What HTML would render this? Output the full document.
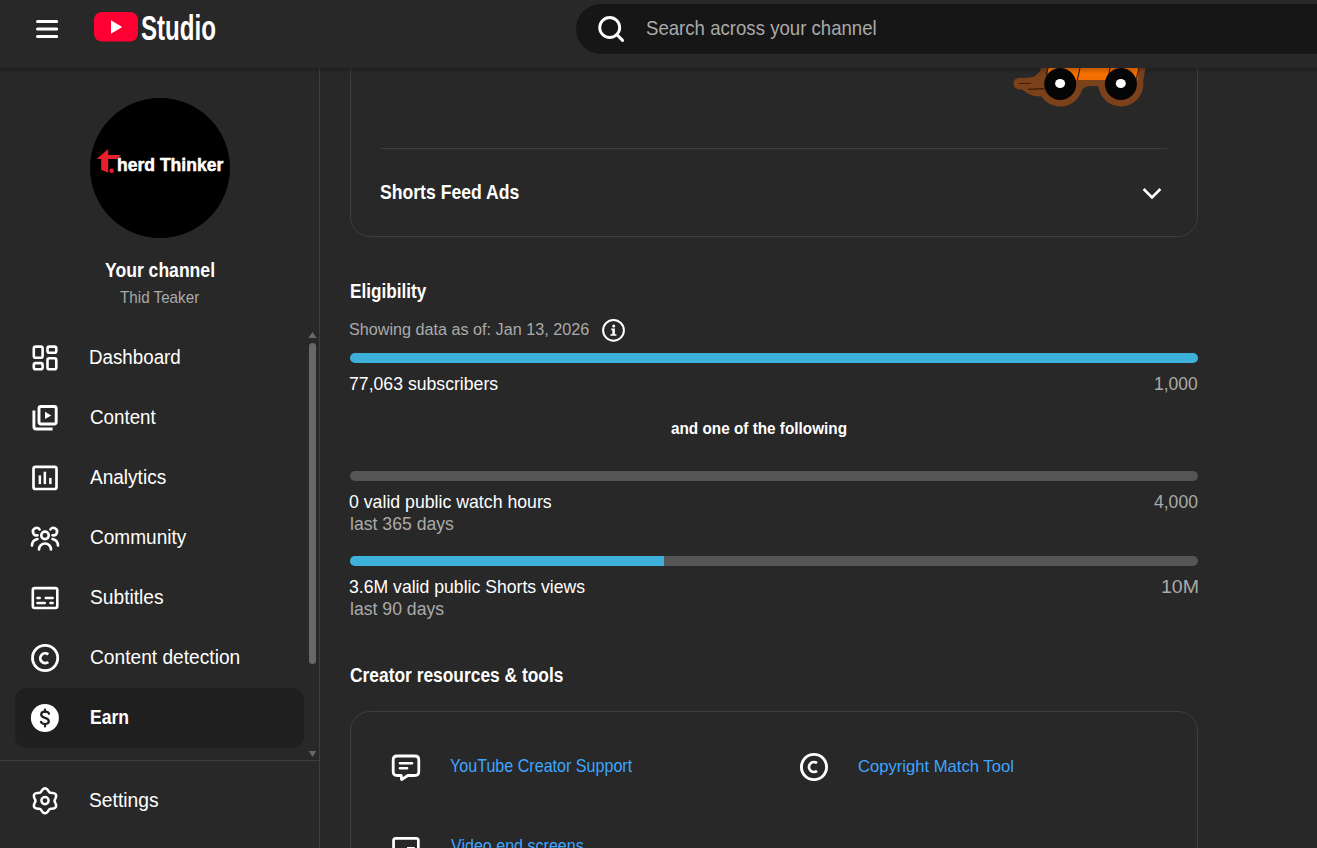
<!DOCTYPE html>
<html><head><meta charset="utf-8">
<style>
html,body{margin:0;padding:0;}
body{width:1317px;height:848px;overflow:hidden;position:relative;background:#282828;font-family:"Liberation Sans",sans-serif;}
.t{position:absolute;white-space:nowrap;line-height:1;}
#sidebar{position:absolute;left:0;top:0;width:319px;height:848px;border-right:1px solid #3e3e3e;background:#282828;}
#header{position:absolute;left:0;top:0;width:1317px;height:68px;background:#282828;}
#hshadow{position:absolute;left:0;top:68px;width:1317px;height:6px;background:linear-gradient(to bottom,rgba(0,0,0,0.2),rgba(0,0,0,0.16) 30%,rgba(0,0,0,0.05) 75%,rgba(0,0,0,0));}
</style></head><body>
<div id="sidebar"></div>
<div style="position:absolute;left:90px;top:98px;width:140px;height:140px;border-radius:50%;background:#000;"></div>
<svg style="position:absolute;left:90px;top:140px" width="40" height="40" viewBox="90 140 40 40">
<path d="M108.2 149.1 L108.2 154.9 L121.1 154.9 L116.9 159.1 L108.2 159.1 L108.2 172.7 L101.2 169.7 L101.2 159.1 L96.5 159.1 Z" fill="#e8202a"/>
<circle cx="111.6" cy="170.8" r="2.3" fill="#e8202a"/></svg>
<svg style="position:absolute;left:180px;top:150px" width="40" height="25" viewBox="180 150 40 25"><circle cx="184.1" cy="157.8" r="1.1" fill="#e8202a"/><circle cx="210.3" cy="166" r="1" fill="#e8202a"/></svg>
<div class="t" style="left:116.97px;top:156px;font-size:18.17px;color:#fff;font-weight:bold;transform:scaleX(0.9661);transform-origin:0 0;-webkit-text-stroke:0.5px #fff;">herd Thinker</div>

<div class="t" style="left:104.65px;top:260px;font-size:20.06px;color:#fff;font-weight:bold;transform:scaleX(0.8766);transform-origin:0 0;">Your channel</div>

<div class="t" style="left:119.70px;top:290px;font-size:16.57px;color:#aaa;transform:scaleX(0.9187);transform-origin:0 0;">Thid Teaker</div>

<div style="position:absolute;left:15px;top:688px;width:289px;height:60px;border-radius:12px;background:#1f1f1f;"></div>
<div class="t" style="left:89.40px;top:347px;font-size:20.35px;color:#fff;transform:scaleX(0.9218);transform-origin:0 0;">Dashboard</div>

<div class="t" style="left:89.76px;top:407px;font-size:20.35px;color:#fff;transform:scaleX(0.9230);transform-origin:0 0;">Content</div>

<div class="t" style="left:90.40px;top:467px;font-size:20.35px;color:#fff;transform:scaleX(0.9358);transform-origin:0 0;">Analytics</div>

<div class="t" style="left:89.75px;top:527px;font-size:20.35px;color:#fff;transform:scaleX(0.9356);transform-origin:0 0;">Community</div>

<div class="t" style="left:89.64px;top:587px;font-size:20.35px;color:#fff;transform:scaleX(0.9435);transform-origin:0 0;">Subtitles</div>

<div class="t" style="left:89.74px;top:647px;font-size:20.35px;color:#fff;transform:scaleX(0.9421);transform-origin:0 0;">Content detection</div>

<div class="t" style="left:89.67px;top:707px;font-size:20.20px;color:#fff;font-weight:bold;transform:scaleX(0.8693);transform-origin:0 0;">Earn</div>

<div class="t" style="left:89.44px;top:791px;font-size:19.91px;color:#fff;transform:scaleX(0.9675);transform-origin:0 0;">Settings</div>

<svg style="position:absolute;left:0;top:0" width="320" height="848">
<g fill="none" stroke="#fff" stroke-width="2.6">
<rect x="33.8" y="346.6" width="8.8" height="11.1" rx="1.8"/>
<rect x="47.5" y="346.6" width="8.8" height="6.1" rx="1.8"/>
<rect x="33.8" y="363.1" width="8.8" height="6.1" rx="1.8"/>
<rect x="47.5" y="358.2" width="8.8" height="11.1" rx="1.8"/>
</g>
<g fill="none" stroke="#fff" stroke-width="2.9">
<rect x="39" y="406.5" width="17.2" height="17.5" rx="2"/>
<path d="M33.9 410.5 V426.5 Q33.9 429 36.4 429 H52.6"/>
</g>
<path d="M45 411.7 L51.3 415.4 L45 419.1 Z" fill="#fff"/>
<g fill="none" stroke="#fff" stroke-width="2.7">
<rect x="33.5" y="466.8" width="23" height="22.2" rx="2"/>
</g>
<g fill="#fff">
<rect x="38.6" y="475.4" width="2.5" height="8.7"/>
<rect x="43.6" y="471.7" width="2.5" height="12.4"/>
<rect x="49.1" y="477.9" width="2.5" height="6.2"/>
</g>
<g fill="none" stroke="#fff" stroke-width="2.6" stroke-linecap="round">
<circle cx="45" cy="535.4" r="3.75"/>
<path d="M39 549.5 A6 6 0 0 1 51 549.5"/>
<path d="M39.6 529.4 A3.7 3.7 0 1 0 37.5 535.2"/>
<path d="M50.4 529.4 A3.7 3.7 0 1 1 52.5 535.2"/>
<path d="M32 545.5 A7 7 0 0 1 37.5 539"/>
<path d="M58 545.5 A7 7 0 0 0 52.5 539"/>
</g>
<g fill="none" stroke="#fff" stroke-width="2.6">
<rect x="32.8" y="588.1" width="24.5" height="19.9" rx="2"/>
</g>
<g stroke="#fff" stroke-width="2.5" stroke-linecap="round">
<path d="M37.45 598 H39.75 M45.75 598 H52.65 M37.45 603 H44.75 M50.45 603 H52.65"/>
</g>
<g fill="none" stroke="#fff" stroke-width="2.8">
<circle cx="45.1" cy="658" r="12.6"/>
<path d="M48.3 654.4 A4.9 4.9 0 1 0 48.3 662"/>
</g>
<circle cx="44.9" cy="718" r="14" fill="#fff"/>
<g fill="none" stroke="#1f1f1f" stroke-width="2.2" stroke-linecap="round">
<path d="M45 709.5 V712 M45 724 V726.5"/>
<path d="M49 713.8 Q48.5 711.6 45 711.6 Q41.2 711.6 41.2 714.6 Q41.2 717 45 717.8 Q48.8 718.6 48.8 721.3 Q48.8 724 45 724 Q41.5 724 41 721.8"/>
</g>
<g fill="none" stroke="#fff" stroke-width="2.5" stroke-linejoin="round">
<path d="M45.00 788.35 L45.65 788.44 L46.27 788.69 L46.85 789.09 L47.38 789.60 L47.85 790.17 L48.26 790.76 L48.64 791.33 L49.00 791.82 L49.37 792.23 L49.77 792.53 L50.24 792.73 L50.78 792.85 L51.39 792.91 L52.06 792.96 L52.78 793.02 L53.51 793.14 L54.21 793.34 L54.85 793.64 L55.38 794.06 L55.78 794.57 L56.03 795.18 L56.12 795.85 L56.07 796.55 L55.89 797.26 L55.63 797.95 L55.32 798.61 L55.02 799.21 L54.77 799.77 L54.61 800.30 L54.55 800.80 L54.61 801.30 L54.77 801.83 L55.02 802.39 L55.32 802.99 L55.63 803.65 L55.89 804.34 L56.07 805.05 L56.12 805.75 L56.03 806.42 L55.78 807.02 L55.38 807.54 L54.85 807.96 L54.21 808.26 L53.51 808.46 L52.78 808.58 L52.06 808.64 L51.39 808.69 L50.78 808.75 L50.24 808.87 L49.77 809.07 L49.37 809.37 L49.00 809.78 L48.64 810.27 L48.26 810.84 L47.85 811.43 L47.38 812.00 L46.85 812.51 L46.27 812.91 L45.65 813.16 L45.00 813.25 L44.35 813.16 L43.73 812.91 L43.15 812.51 L42.62 812.00 L42.15 811.43 L41.74 810.84 L41.36 810.27 L41.00 809.78 L40.63 809.37 L40.23 809.07 L39.76 808.87 L39.22 808.75 L38.61 808.69 L37.94 808.64 L37.22 808.58 L36.49 808.46 L35.79 808.26 L35.15 807.96 L34.62 807.54 L34.22 807.02 L33.97 806.42 L33.88 805.75 L33.93 805.05 L34.11 804.34 L34.37 803.65 L34.68 802.99 L34.98 802.39 L35.23 801.83 L35.39 801.30 L35.45 800.80 L35.39 800.30 L35.23 799.77 L34.98 799.21 L34.68 798.61 L34.37 797.95 L34.11 797.26 L33.93 796.55 L33.88 795.85 L33.97 795.18 L34.22 794.57 L34.62 794.06 L35.15 793.64 L35.79 793.34 L36.49 793.14 L37.22 793.02 L37.94 792.96 L38.61 792.91 L39.22 792.85 L39.76 792.73 L40.23 792.53 L40.63 792.23 L41.00 791.82 L41.36 791.33 L41.74 790.76 L42.15 790.17 L42.62 789.60 L43.15 789.09 L43.73 788.69 L44.35 788.44 L45.00 788.35Z"/>
<circle cx="45" cy="800.6" r="3.6"/>
</g>
</svg>
<svg style="position:absolute;left:300px;top:325px" width="20" height="440"><path d="M308.3 13 L312.5 7 L316.7 13 Z" transform="translate(-300,0)" fill="#686868"/><path d="M308.8 426 L312.5 432 L316.2 426 Z" transform="translate(-300,0)" fill="#686868"/></svg>
<div style="position:absolute;left:309px;top:343px;width:7px;height:321px;border-radius:3.5px;background:#686868;"></div>
<div style="position:absolute;left:0;top:760px;width:319px;height:1px;background:#3e3e3e;"></div>
<div style="position:absolute;left:350px;top:-60px;width:846px;height:294.5px;border:1px solid #3e3e3e;border-radius:20px;"></div>
<div style="position:absolute;left:381px;top:148px;width:786px;height:1px;background:#3e3e3e;"></div>
<div class="t" style="left:380.37px;top:182px;font-size:20.06px;color:#fff;font-weight:bold;transform:scaleX(0.8781);transform-origin:0 0;">Shorts Feed Ads</div>

<svg style="position:absolute;left:1140px;top:184px" width="24" height="20"><path d="M3.6 5 L12 13.5 L20.4 5" fill="none" stroke="#fff" stroke-width="2.6"/></svg>
<svg style="position:absolute;left:1000px;top:60px" width="160" height="50" viewBox="1000 60 160 50">
<defs><linearGradient id="og" x1="0" y1="0" x2="0" y2="1"><stop offset="0" stop-color="#ff7a00"/><stop offset="1" stop-color="#f36c00"/></linearGradient></defs>
<path d="M1041 60 L1041 68 C1039 75 1034 77.5 1027 77.8 L1021 78 C1015 78.2 1013.5 80.5 1013.5 83.5 C1013.5 87 1016 89.3 1020.5 89.6 C1025 90 1026.5 95.5 1037 96.2 L1041.55 96.58 A22.5 22.5 0 0 0 1082.03 89.44 Q1086 86 1091 86 L1097 86 Q1098.5 86.3 1099.17 89.82 A22.5 22.5 0 0 0 1143.18 80.87 L1145.5 68 L1146 60 Z" fill="#7a411b"/>
<path d="M1048 60 L1140 60 L1137.5 80 L1048 80 Z" fill="url(#og)"/>
<path d="M1048 68 L1046 75 M1080 68 L1077.3 80 M1110 68 L1107.5 80 M1139 68 L1136 80" stroke="#2a1200" stroke-width="1"/>
<path d="M1019.2 83.5 H1030.8 M1028 89.3 L1044 88.6" stroke="#3a1c08" stroke-width="1.2"/>
<circle cx="1060.2" cy="84" r="16" fill="#050505"/>
<circle cx="1120.9" cy="84" r="16" fill="#050505"/>
<ellipse cx="1060.1" cy="83.5" rx="5" ry="4.6" fill="#fff"/>
<ellipse cx="1120.8" cy="83.5" rx="5" ry="4.6" fill="#fff"/>
</svg>
<div class="t" style="left:349.70px;top:281px;font-size:20.35px;color:#fff;font-weight:bold;transform:scaleX(0.8434);transform-origin:0 0;">Eligibility</div>

<div class="t" style="left:349.39px;top:321px;font-size:17.30px;color:#aaa;transform:scaleX(0.9362);transform-origin:0 0;">Showing data as of: Jan 13, 2026</div>

<svg style="position:absolute;left:600px;top:317px" width="27" height="27" viewBox="0 0 27 27">
<circle cx="13.5" cy="13.3" r="10.4" fill="none" stroke="#fff" stroke-width="2"/>
<circle cx="13.7" cy="9" r="1.5" fill="#fff"/>
<path d="M11.2 11.6 H14.9 V17.2 H16.4 V18.8 H10.4 V17.2 H12.3 V13.2 H11.2 Z" fill="#fff"/>
</svg>
<div style="position:absolute;left:350px;top:353px;width:848px;height:10px;border-radius:5px;background:#555;overflow:hidden;"><div style="width:848px;height:10px;background:#3eb1da;"></div></div>
<div class="t" style="left:349.12px;top:375px;font-size:18.60px;color:#fff;transform:scaleX(0.9492);transform-origin:0 0;">77,063 subscribers</div>

<div class="t" style="left:1154.30px;top:375px;font-size:18.60px;color:#aaa;transform:scaleX(0.9397);transform-origin:0 0;">1,000</div>

<div class="t" style="left:670.84px;top:421px;font-size:16.55px;color:#fff;font-weight:bold;transform:scaleX(0.9260);transform-origin:0 0;">and one of the following</div>

<div style="position:absolute;left:350px;top:471px;width:848px;height:10px;border-radius:5px;background:#555;overflow:hidden;"></div>
<div class="t" style="left:349.49px;top:493px;font-size:18.60px;color:#fff;transform:scaleX(0.9519);transform-origin:0 0;">0 valid public watch hours</div>

<div class="t" style="left:1154.15px;top:493px;font-size:18.60px;color:#aaa;transform:scaleX(0.9431);transform-origin:0 0;">4,000</div>

<div class="t" style="left:349.76px;top:514px;font-size:19.03px;color:#aaa;transform:scaleX(0.9275);transform-origin:0 0;">last 365 days</div>

<div style="position:absolute;left:350px;top:556px;width:848px;height:10px;border-radius:5px;background:#555;overflow:hidden;"><div style="width:314px;height:10px;background:#3eb1da;"></div></div>
<div class="t" style="left:349.49px;top:578px;font-size:18.60px;color:#fff;transform:scaleX(0.9481);transform-origin:0 0;">3.6M valid public Shorts views</div>

<div class="t" style="left:1160.94px;top:578px;font-size:18.60px;color:#aaa;transform:scaleX(1.0511);transform-origin:0 0;">10M</div>

<div class="t" style="left:349.76px;top:599px;font-size:19.03px;color:#aaa;transform:scaleX(0.9274);transform-origin:0 0;">last 90 days</div>

<div class="t" style="left:349.70px;top:666px;font-size:19.91px;color:#fff;font-weight:bold;transform:scaleX(0.8732);transform-origin:0 0;">Creator resources &amp; tools</div>

<div style="position:absolute;left:350px;top:711px;width:846px;height:300px;border:1px solid #3e3e3e;border-radius:20px;"></div>
<svg style="position:absolute;left:388px;top:751px" width="36" height="34" viewBox="388 751 36 34">
<path d="M397.2 756 H414.8 Q418.8 756 418.8 760 V771.5 Q418.8 775.5 414.8 775.5 H407.8 L401.6 779.6 L401.2 775.5 H397.2 Q393.2 775.5 393.2 771.5 V760 Q393.2 756 397.2 756 Z" fill="none" stroke="#fff" stroke-width="2.8" stroke-linejoin="round"/>
<path d="M399.95 763.2 H412.05 M399.95 768.3 H407.05" stroke="#fff" stroke-width="2.6" stroke-linecap="round"/>
</svg>
<div class="t" style="left:450.22px;top:758px;font-size:17.59px;color:#3ea6ff;transform:scaleX(0.9154);transform-origin:0 0;">YouTube Creator Support</div>

<svg style="position:absolute;left:796px;top:749px" width="36" height="36" viewBox="796 749 36 36">
<circle cx="814" cy="767" r="12.6" fill="none" stroke="#fff" stroke-width="2.9"/>
<path d="M817 763.2 A4.9 4.9 0 1 0 817 770.8" fill="none" stroke="#fff" stroke-width="2.8"/>
</svg>
<div class="t" style="left:858.07px;top:758px;font-size:17.01px;color:#3ea6ff;transform:scaleX(0.9777);transform-origin:0 0;">Copyright Match Tool</div>

<svg style="position:absolute;left:388px;top:832px" width="36" height="16" viewBox="388 832 36 16">
<rect x="393.55" y="838.35" width="24.8" height="20" rx="2.2" fill="none" stroke="#fff" stroke-width="2.7"/>
<rect x="407" y="847" width="7.9" height="5" fill="#fff"/>
</svg>
<div class="t" style="left:450.84px;top:838px;font-size:17.44px;color:#3ea6ff;transform:scaleX(0.9208);transform-origin:0 0;">Video end screens</div>

<div id="header"></div><div id="hshadow"></div>
<svg style="position:absolute;left:30px;top:14px" width="34" height="30" viewBox="30 14 34 30">
<path d="M37.5 21.5 H56.7 M37.5 29 H56.7 M37.5 36.5 H56.7" stroke="#fff" stroke-width="3" stroke-linecap="round"/>
</svg>
<svg style="position:absolute;left:90px;top:8px" width="130" height="40" viewBox="90 8 130 40">
<rect x="94" y="12" width="44" height="29.6" rx="8" fill="#ff0033"/>
<path d="M111 20.3 L122.2 27 L111 33.7 Z" fill="#fff"/>
</svg>
<div class="t" style="left:141px;top:10.3px;font-size:35px;font-weight:bold;color:#fff;transform-origin:0 0;transform:scaleX(0.689);letter-spacing:0px;">Studio</div>
<div style="position:absolute;left:576px;top:4px;width:800px;height:50px;border-radius:25px;background:#161616;"></div>
<svg style="position:absolute;left:592px;top:12px" width="36" height="36" viewBox="592 12 36 36">
<circle cx="609.7" cy="27.5" r="10" fill="none" stroke="#fff" stroke-width="2.9"/>
<path d="M616.8 34.6 L622.6 40.4" stroke="#fff" stroke-width="2.9" stroke-linecap="round"/>
</svg>
<div class="t" style="left:646.37px;top:18px;font-size:20.06px;color:#aaa;transform:scaleX(0.9284);transform-origin:0 0;">Search across your channel</div>

</body></html>
